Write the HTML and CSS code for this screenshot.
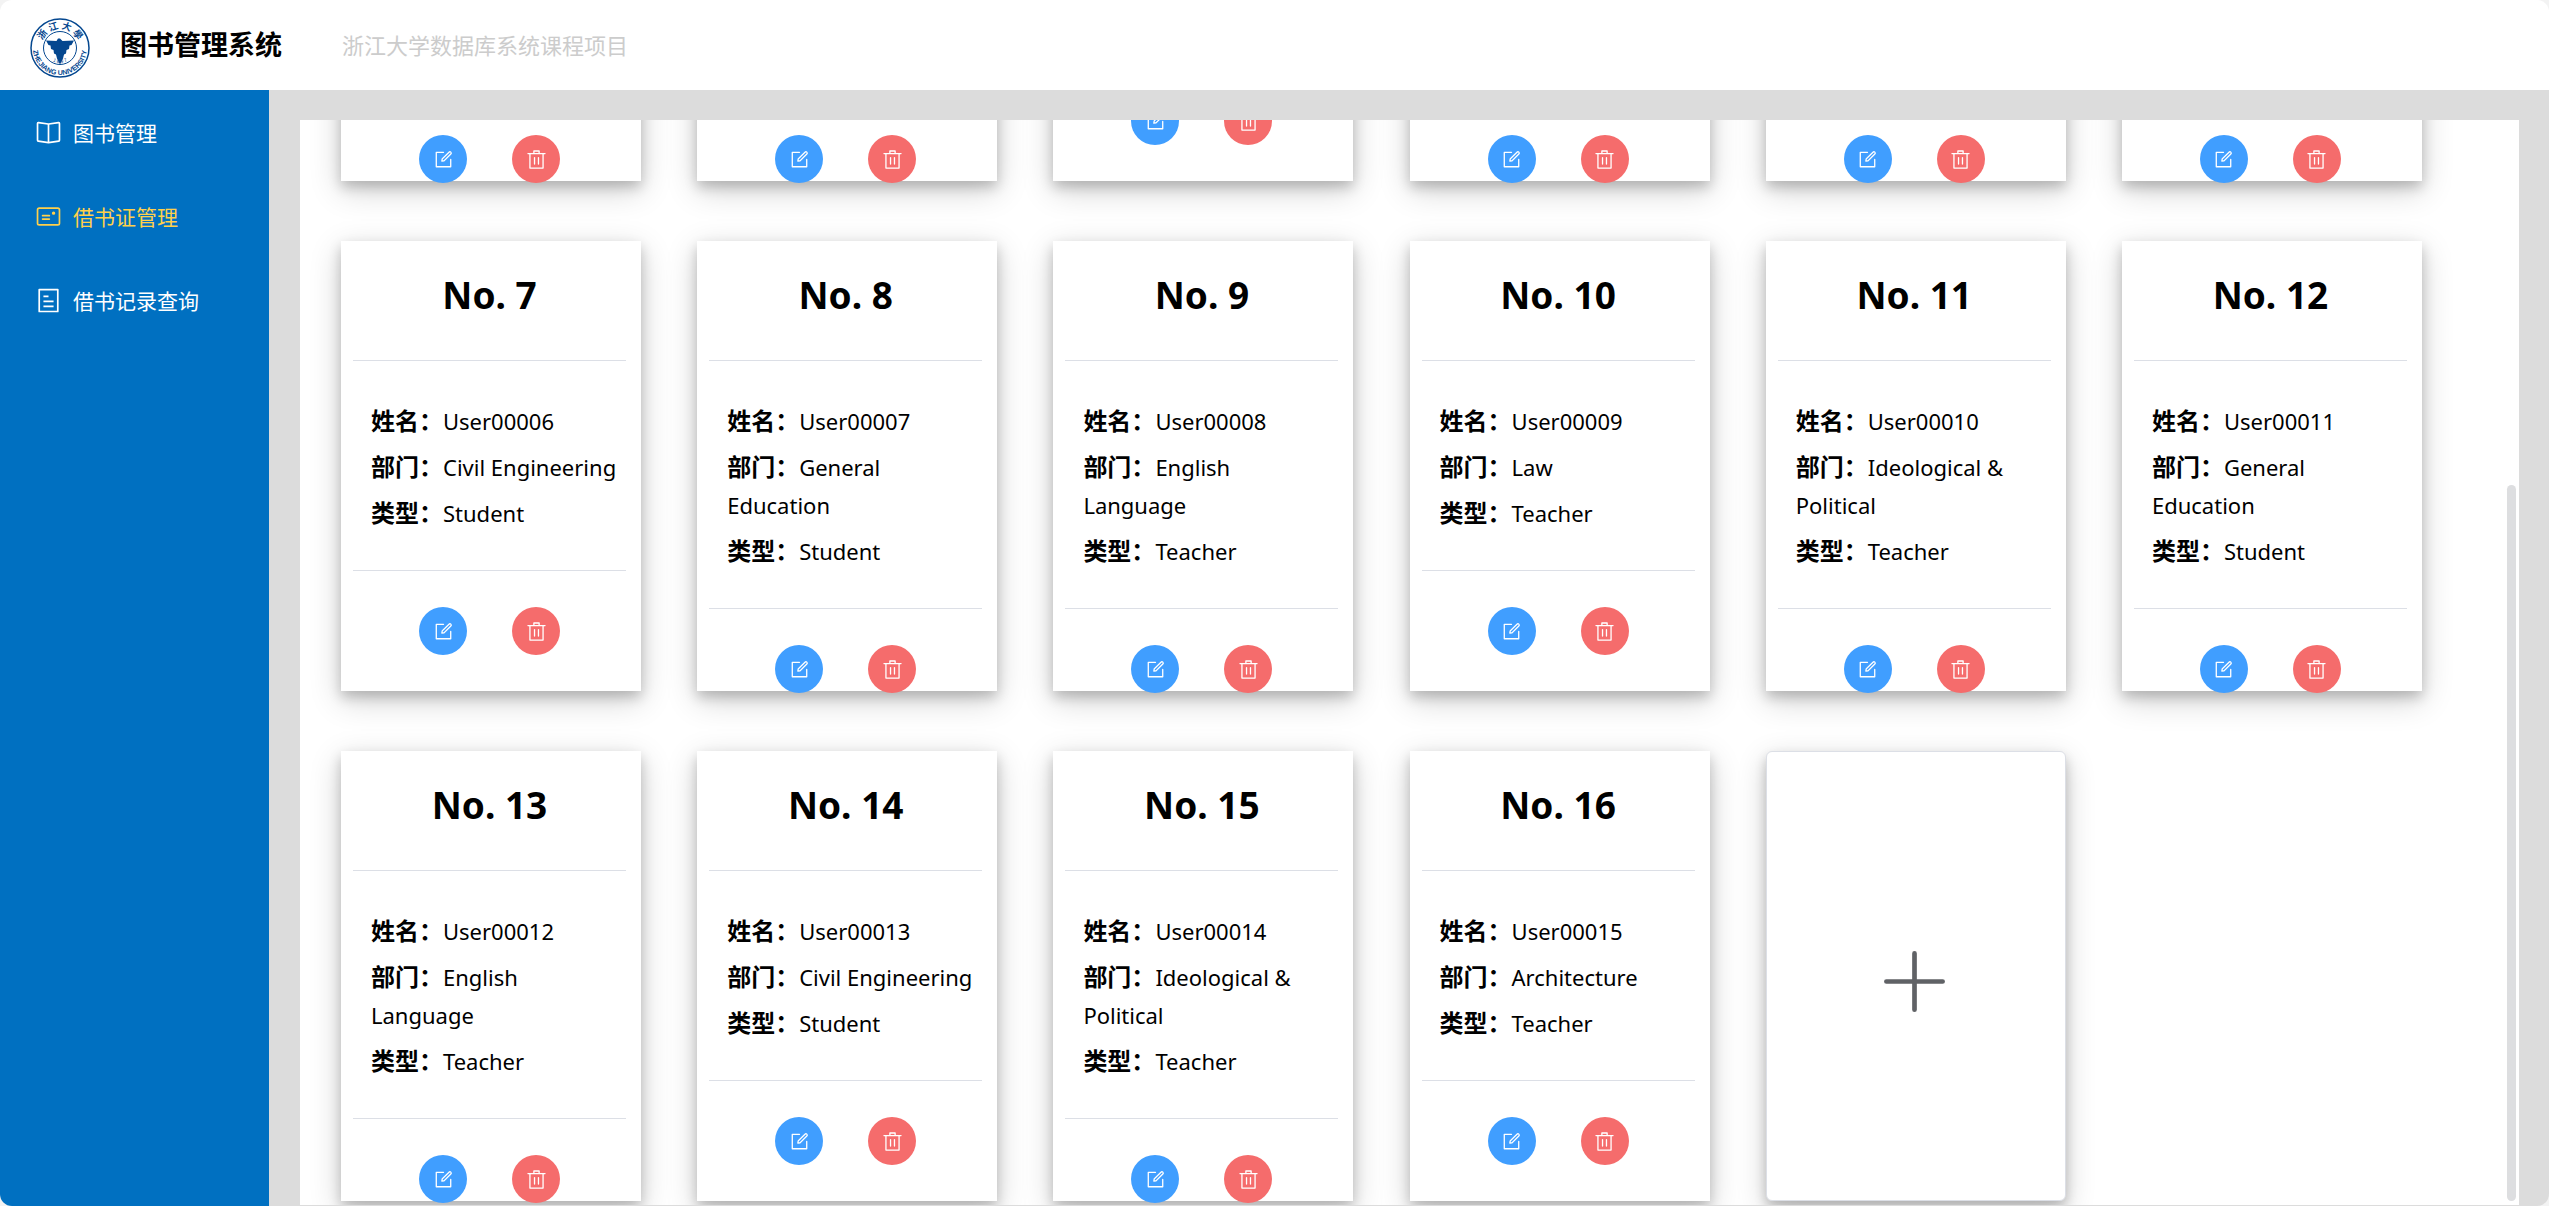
FILE: index.html
```html
<!DOCTYPE html>
<html lang="zh-CN">
<head>
<meta charset="utf-8">
<title>图书管理系统</title>
<link rel="stylesheet" href="styles.css">
</head>
<body>
<svg class="sprite" aria-hidden="true">
  <symbol id="edit" viewBox="0 0 1024 1024"><path d="M832 512a32 32 0 1 1 64 0v352a32 32 0 0 1-32 32H160a32 32 0 0 1-32-32V160a32 32 0 0 1 32-32h352a32 32 0 0 1 0 64H192v640h640V512z"/><path d="m469.952 554.24 52.8-7.552L847.104 222.4a32 32 0 1 0-45.248-45.248L477.44 501.44l-7.552 52.8zm422.4-422.4a96 96 0 0 1 0 135.808l-331.84 331.84a32 32 0 0 1-18.112 9.088L436.8 623.68a32 32 0 0 1-36.224-36.224l15.104-105.6a32 32 0 0 1 9.024-18.112l331.904-331.84a96 96 0 0 1 135.744 0z"/></symbol>
  <symbol id="delete" viewBox="0 0 1024 1024"><path d="M160 256H96a32 32 0 0 1 0-64h256V95.936a32 32 0 0 1 32-32h256a32 32 0 0 1 32 32V192h256a32 32 0 1 1 0 64h-64v672a32 32 0 0 1-32 32H192a32 32 0 0 1-32-32V256zm448-64v-64H416v64h192zM224 896h576V256H224v640zm192-128a32 32 0 0 1-32-32V416a32 32 0 0 1 64 0v320a32 32 0 0 1-32 32zm192 0a32 32 0 0 1-32-32V416a32 32 0 0 1 64 0v320a32 32 0 0 1-32 32z"/></symbol>
  <symbol id="plus" viewBox="0 0 1024 1024"><path d="M480 480V128a32 32 0 0 1 64 0v352h352a32 32 0 1 1 0 64H544v352a32 32 0 1 1-64 0V544H128a32 32 0 0 1 0-64h352z"/></symbol>
  <symbol id="reading" viewBox="0 0 1024 1024"><path d="m512 863.36 384-54.848v-638.72L525.568 222.72a96 96 0 0 1-27.136 0L128 169.792v638.72l384 54.848zM137.024 106.432l370.432 52.928a32 32 0 0 0 9.088 0l370.432-52.928A64 64 0 0 1 960 169.792v638.72a64 64 0 0 1-54.976 63.36l-388.48 55.488a32 32 0 0 1-9.088 0l-388.48-55.488A64 64 0 0 1 64 808.512v-638.72a64 64 0 0 1 73.024-63.36z"/><path d="M480 192h64v704h-64z"/></symbol>
  <symbol id="postcard" viewBox="0 0 1024 1024"><path d="M160 224a32 32 0 0 0-32 32v512a32 32 0 0 0 32 32h704a32 32 0 0 0 32-32V256a32 32 0 0 0-32-32H160zm0-64h704a96 96 0 0 1 96 96v512a96 96 0 0 1-96 96H160a96 96 0 0 1-96-96V256a96 96 0 0 1 96-96z"/><path d="M704 320a64 64 0 1 1 0 128 64 64 0 0 1 0-128zM288 448h256q32 0 32 32t-32 32H288q-32 0-32-32t32-32zm0 128h256q32 0 32 32t-32 32H288q-32 0-32-32t32-32z"/></symbol>
  <symbol id="tickets" viewBox="0 0 1024 1024"><path d="M192 128v768h640V128H192zm-32-64h704a32 32 0 0 1 32 32v832a32 32 0 0 1-32 32H160a32 32 0 0 1-32-32V96a32 32 0 0 1 32-32zm160 448h384v64H320v-64zm0-192h192v64H320v-64zm0 384h384v64H320v-64z"/></symbol>
</svg>

<div class="app">
  <header class="header">
    <svg class="logo" viewBox="0 0 120 120" role="img" aria-label="浙江大学">
      <defs>
        <path id="arc-top" d="M22 60a38 38 0 0 1 76 0"/>
        <path id="arc-bottom" d="M6 60a54 54 0 0 0 108 0"/>
        <path id="arc-year" d="M30 60a30 30 0 0 0 60 0"/>
      </defs>
      <circle cx="60" cy="60" r="58" class="ring"/>
      <circle cx="60" cy="60" r="33" class="ring ring-thin"/>
      <text class="logo-name"><textPath href="#arc-top" startOffset="50%">浙 江 大 學</textPath></text>
      <text class="logo-latin"><textPath href="#arc-bottom" startOffset="50%">ZHEJIANG UNIVERSITY</textPath></text>
      <path class="bird" d="M32 45l21 1 3-5h4l5 5 23-1-5 9-4 1-1 7-5 2-1 7-4 2-2 8-6 12-6-12-2-8-4-2-1-7-5-2-1-7-4-1z"/>
      <text class="logo-year"><textPath href="#arc-year" startOffset="50%">1 8 9 7</textPath></text>
    </svg>
    <h1 class="title">图书管理系统</h1>
    <p class="subtitle">浙江大学数据库系统课程项目</p>
  </header>

  <div class="body">
    <nav class="menu">
      <a class="menu-item" href="#book"><svg class="menu-icon"><use href="#reading"/></svg>图书管理</a>
      <a class="menu-item active" href="#card"><svg class="menu-icon"><use href="#postcard"/></svg>借书证管理</a>
      <a class="menu-item" href="#borrow"><svg class="menu-icon"><use href="#tickets"/></svg>借书记录查询</a>
    </nav>

    <main class="main">
      <div class="panel">
        <div class="scroll">
          <div class="cards">
            <article class="card"><h2>No. 1</h2><div class="info"><p><b>姓名：</b>User00000</p><p><b>部门：</b>General Education</p><p><b>类型：</b>Student</p></div><div class="actions"><button class="btn edit" aria-label="编辑"><svg><use href="#edit"/></svg></button><button class="btn delete" aria-label="删除"><svg><use href="#delete"/></svg></button></div></article>
            <article class="card"><h2>No. 2</h2><div class="info"><p><b>姓名：</b>User00001</p><p><b>部门：</b>English Language</p><p><b>类型：</b>Student</p></div><div class="actions"><button class="btn edit" aria-label="编辑"><svg><use href="#edit"/></svg></button><button class="btn delete" aria-label="删除"><svg><use href="#delete"/></svg></button></div></article>
            <article class="card"><h2>No. 3</h2><div class="info"><p><b>姓名：</b>User00002</p><p><b>部门：</b>Law</p><p><b>类型：</b>Teacher</p></div><div class="actions"><button class="btn edit" aria-label="编辑"><svg><use href="#edit"/></svg></button><button class="btn delete" aria-label="删除"><svg><use href="#delete"/></svg></button></div></article>
            <article class="card"><h2>No. 4</h2><div class="info"><p><b>姓名：</b>User00003</p><p><b>部门：</b>Ideological &amp; Political</p><p><b>类型：</b>Student</p></div><div class="actions"><button class="btn edit" aria-label="编辑"><svg><use href="#edit"/></svg></button><button class="btn delete" aria-label="删除"><svg><use href="#delete"/></svg></button></div></article>
            <article class="card"><h2>No. 5</h2><div class="info"><p><b>姓名：</b>User00004</p><p><b>部门：</b>General Education</p><p><b>类型：</b>Teacher</p></div><div class="actions"><button class="btn edit" aria-label="编辑"><svg><use href="#edit"/></svg></button><button class="btn delete" aria-label="删除"><svg><use href="#delete"/></svg></button></div></article>
            <article class="card"><h2>No. 6</h2><div class="info"><p><b>姓名：</b>User00005</p><p><b>部门：</b>English Language</p><p><b>类型：</b>Student</p></div><div class="actions"><button class="btn edit" aria-label="编辑"><svg><use href="#edit"/></svg></button><button class="btn delete" aria-label="删除"><svg><use href="#delete"/></svg></button></div></article>
            <article class="card"><h2>No. 7</h2><div class="info"><p><b>姓名：</b>User00006</p><p><b>部门：</b>Civil Engineering</p><p><b>类型：</b>Student</p></div><div class="actions"><button class="btn edit" aria-label="编辑"><svg><use href="#edit"/></svg></button><button class="btn delete" aria-label="删除"><svg><use href="#delete"/></svg></button></div></article>
            <article class="card"><h2>No. 8</h2><div class="info"><p><b>姓名：</b>User00007</p><p><b>部门：</b>General Education</p><p><b>类型：</b>Student</p></div><div class="actions"><button class="btn edit" aria-label="编辑"><svg><use href="#edit"/></svg></button><button class="btn delete" aria-label="删除"><svg><use href="#delete"/></svg></button></div></article>
            <article class="card"><h2>No. 9</h2><div class="info"><p><b>姓名：</b>User00008</p><p><b>部门：</b>English Language</p><p><b>类型：</b>Teacher</p></div><div class="actions"><button class="btn edit" aria-label="编辑"><svg><use href="#edit"/></svg></button><button class="btn delete" aria-label="删除"><svg><use href="#delete"/></svg></button></div></article>
            <article class="card"><h2>No. 10</h2><div class="info"><p><b>姓名：</b>User00009</p><p><b>部门：</b>Law</p><p><b>类型：</b>Teacher</p></div><div class="actions"><button class="btn edit" aria-label="编辑"><svg><use href="#edit"/></svg></button><button class="btn delete" aria-label="删除"><svg><use href="#delete"/></svg></button></div></article>
            <article class="card"><h2>No. 11</h2><div class="info"><p><b>姓名：</b>User00010</p><p><b>部门：</b>Ideological &amp; Political</p><p><b>类型：</b>Teacher</p></div><div class="actions"><button class="btn edit" aria-label="编辑"><svg><use href="#edit"/></svg></button><button class="btn delete" aria-label="删除"><svg><use href="#delete"/></svg></button></div></article>
            <article class="card"><h2>No. 12</h2><div class="info"><p><b>姓名：</b>User00011</p><p><b>部门：</b>General Education</p><p><b>类型：</b>Student</p></div><div class="actions"><button class="btn edit" aria-label="编辑"><svg><use href="#edit"/></svg></button><button class="btn delete" aria-label="删除"><svg><use href="#delete"/></svg></button></div></article>
            <article class="card"><h2>No. 13</h2><div class="info"><p><b>姓名：</b>User00012</p><p><b>部门：</b>English Language</p><p><b>类型：</b>Teacher</p></div><div class="actions"><button class="btn edit" aria-label="编辑"><svg><use href="#edit"/></svg></button><button class="btn delete" aria-label="删除"><svg><use href="#delete"/></svg></button></div></article>
            <article class="card"><h2>No. 14</h2><div class="info"><p><b>姓名：</b>User00013</p><p><b>部门：</b>Civil Engineering</p><p><b>类型：</b>Student</p></div><div class="actions"><button class="btn edit" aria-label="编辑"><svg><use href="#edit"/></svg></button><button class="btn delete" aria-label="删除"><svg><use href="#delete"/></svg></button></div></article>
            <article class="card"><h2>No. 15</h2><div class="info"><p><b>姓名：</b>User00014</p><p><b>部门：</b>Ideological &amp; Political</p><p><b>类型：</b>Teacher</p></div><div class="actions"><button class="btn edit" aria-label="编辑"><svg><use href="#edit"/></svg></button><button class="btn delete" aria-label="删除"><svg><use href="#delete"/></svg></button></div></article>
            <article class="card"><h2>No. 16</h2><div class="info"><p><b>姓名：</b>User00015</p><p><b>部门：</b>Architecture</p><p><b>类型：</b>Teacher</p></div><div class="actions"><button class="btn edit" aria-label="编辑"><svg><use href="#edit"/></svg></button><button class="btn delete" aria-label="删除"><svg><use href="#delete"/></svg></button></div></article>
            <button class="add" aria-label="新建借书证"><svg><use href="#plus"/></svg></button>
          </div>
        </div>
        <div class="thumb"></div>
      </div>
    </main>
  </div>
</div>
</body>
</html>
```

FILE: styles.css
```css
* { box-sizing: border-box; }

body {
  margin: 0;
  background: #f3f3f3;
  color: #000;
  font-family: "Noto Sans", "Noto Sans CJK SC", sans-serif;
}

h1, h2, p { margin: 0; }

svg { fill: currentColor; }

.sprite { display: none; }

.app {
  display: flex;
  flex-direction: column;
  height: 100vh;
  overflow: hidden;
  border-radius: 12px;
}

/* header */
.header {
  display: flex;
  flex: none;
  align-items: center;
  height: 90px;
  padding-left: 30px;
  background: #fff;
}

.logo {
  width: 60px;
  height: 60px;
  margin-top: 6px;
  color: #04478f;
}

.ring { fill: none; stroke: currentColor; stroke-width: 3; }
.ring-thin { stroke-width: 2; }

.logo text { text-anchor: middle; font-family: "Noto Sans CJK SC", sans-serif; }
.logo .logo-name { font-size: 19px; font-weight: 700; }
.logo .logo-latin { font-family: "Liberation Sans", sans-serif; font-size: 14px; font-weight: 700; }
.logo .logo-year { font-family: "Liberation Sans", sans-serif; font-size: 10px; }

.title {
  margin-left: 30px;
  font-size: 27px;
  line-height: 40px;
}

.subtitle {
  margin-left: 60px;
  color: #ccc;
  font-size: 22px;
  line-height: 40px;
}

/* layout */
.body { display: flex; flex: 1; min-height: 0; }

.menu {
  flex: none;
  width: 269px;
  background: #0070c1;
}

.menu-item {
  display: flex;
  align-items: center;
  gap: 11px;
  height: 84px;
  padding-left: 35px;
  color: #fff;
  font-size: 21px;
  text-decoration: none;
}

.menu-item.active { color: #ffd04b; }

.menu-icon { width: 27px; height: 27px; }

.main {
  display: flex;
  flex: 1;
  min-width: 0;
  padding: 30px 30px 1px 31px;
  background: #dcdcdc;
}

.panel {
  position: relative;
  flex: 1;
  min-width: 0;
  background: #fff;
}

.scroll {
  display: flex;
  flex-direction: column-reverse;
  height: 100%;
  overflow: auto;
  scrollbar-width: none;
}

.thumb {
  position: absolute;
  right: 3px;
  bottom: 4px;
  width: 9px;
  height: 66%;
  border-radius: 5px;
  background: #dddee0;
}

/* cards */
.cards {
  display: grid;
  flex: none;
  grid-template-columns: repeat(auto-fill, 300px);
  justify-content: space-between;
  gap: 60px 50px;
  padding: 40px 97px 4px 41px;
}

.card, .add {
  height: 450px;
  background: #fff;
  box-shadow: 0 6px 12px rgba(0, 0, 0, .2), 0 9px 30px rgba(0, 0, 0, .19);
}

.card { padding: 0 15px 0 12px; }

.card h2 {
  height: 120px;
  border-bottom: 1px solid #dcdfe6;
  font-size: 37px;
  line-height: 108px;
  text-align: center;
}

.info {
  padding: 41px 0 38px 18px;
  font-size: 22px;
  line-height: 38px;
}

.info p + p { margin-top: 8px; }

.info b {
  font-size: 24px;
  font-family: "Noto Sans CJK SC", sans-serif;
  line-height: 1;
}

.actions {
  display: flex;
  justify-content: center;
  gap: 45px;
  padding-top: 36px;
  border-top: 1px solid #dcdfe6;
}

.btn {
  display: grid;
  place-items: center;
  width: 48px;
  height: 48px;
  padding: 0;
  border: 0;
  border-radius: 50%;
  color: #fff;
}

.btn svg { width: 21px; height: 21px; }
.edit { background: #409eff; }
.delete { background: #f56c6c; }

.add {
  display: grid;
  place-items: center;
  padding: 10px 2px 0 0;
  border: 1px solid #dcdfe6;
  border-radius: 6px;
  color: #606266;
}

.add svg { width: 75px; height: 75px; }
```
